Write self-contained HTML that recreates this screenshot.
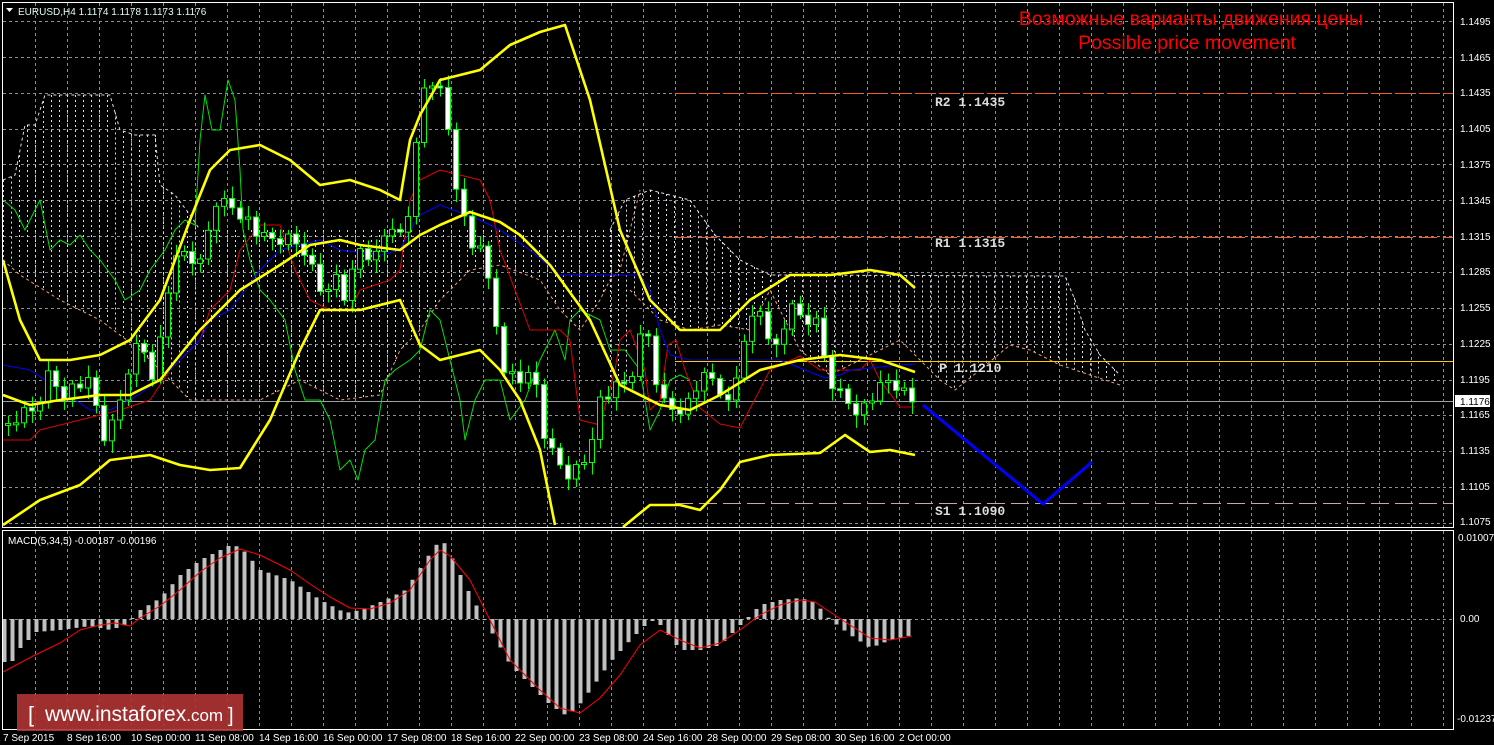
<!DOCTYPE html>
<html><head><meta charset="utf-8"><style>
html,body{margin:0;padding:0;background:#000;width:1494px;height:745px;overflow:hidden}
svg{display:block}
text{font-family:"Liberation Sans",sans-serif}
.ax{fill:#fff;font-size:10px}
.dt{fill:#fff;font-size:10px}
.lv{fill:#ddd;font-family:"Liberation Mono",monospace;font-size:13px;font-weight:bold}
</style></head><body>
<svg id="s" width="1494" height="745" xmlns="http://www.w3.org/2000/svg">
<rect width="1494" height="745" fill="#000"/>
<g id="grid"></g>
<g id="cloud"></g>
<g id="draw"></g>
<rect x="2.5" y="2.5" width="1451" height="525" fill="none" stroke="#fff" stroke-width="1"/>
<rect x="2.5" y="530.5" width="1451" height="199" fill="none" stroke="#fff" stroke-width="1"/>
<polygon points="6,8 13,8 9.5,12" fill="#fff"/>
<text x="18" y="15" fill="#dfe" font-size="10">EURUSD,H4  1.1174 1.1178 1.1173 1.1176</text>
<text x="1191" y="25" fill="#f00" font-size="19.5" text-anchor="middle">Возможные варианты движения цены</text>
<text x="1187" y="49" fill="#f00" font-size="19.5" text-anchor="middle">Possible price movement</text>
<text x="935" y="106" class="lv">R2 1.1435</text>
<text x="935" y="247" class="lv">R1 1.1315</text>
<text x="939" y="372" class="lv">P 1.1210</text>
<text x="935" y="515" class="lv">S1 1.1090</text>
<g class="ax">
<text x="1460" y="25">1.1495</text><text x="1460" y="61">1.1465</text><text x="1460" y="96">1.1435</text>
<text x="1460" y="132">1.1405</text><text x="1460" y="168">1.1375</text><text x="1460" y="204">1.1345</text>
<text x="1460" y="240">1.1315</text><text x="1460" y="275">1.1285</text><text x="1460" y="311">1.1255</text>
<text x="1460" y="347">1.1225</text><text x="1460" y="383">1.1195</text><text x="1460" y="418">1.1165</text>
<text x="1460" y="454">1.1135</text><text x="1460" y="490">1.1105</text><text x="1460" y="525">1.1075</text>
<text x="1458" y="541">0.01007</text><text x="1460" y="622">0.00</text><text x="1457" y="722">-0.01237</text>
</g>
<rect x="1455" y="395" width="35" height="12" fill="#fff"/>
<text x="1460" y="405" fill="#000" font-size="10">1.1176</text>
<text x="8" y="544" fill="#fff" font-size="10">MACD(5,34,5) -0.00187 -0.00196</text>
<g class="dt">
<text x="3" y="741">7 Sep 2015</text><text x="67" y="741">8 Sep 16:00</text><text x="131" y="741">10 Sep 00:00</text>
<text x="195" y="741">11 Sep 08:00</text><text x="259" y="741">14 Sep 16:00</text><text x="323" y="741">16 Sep 00:00</text>
<text x="387" y="741">17 Sep 08:00</text><text x="451" y="741">18 Sep 16:00</text><text x="515" y="741">22 Sep 00:00</text>
<text x="579" y="741">23 Sep 08:00</text><text x="643" y="741">24 Sep 16:00</text><text x="707" y="741">28 Sep 00:00</text>
<text x="771" y="741">29 Sep 08:00</text><text x="835" y="741">30 Sep 16:00</text><text x="899" y="741">2 Oct 00:00</text>
</g>
<rect x="17" y="694" width="226" height="37" fill="#b03434" opacity="0.9"/>
<text x="28" y="722" fill="#fff" font-size="22">[</text>
<text x="45" y="721" fill="#fff" font-size="21">www.instaforex<tspan font-size="17">.com</tspan></text>
<text x="228" y="722" fill="#fff" font-size="20">]</text>
</svg>
<script>
const NS="http://www.w3.org/2000/svg";
function el(p,t,a){const e=document.createElementNS(NS,t);for(const k in a)e.setAttribute(k,a[k]);p.appendChild(e);return e}
const G=document.getElementById('grid'),C=document.getElementById('cloud'),D=document.getElementById('draw');
for(let x=35;x<1454;x+=32){el(G,'line',{x1:x+.5,y1:3,x2:x+.5,y2:527,stroke:'#8a8f99','stroke-dasharray':'3,3'});el(G,'line',{x1:x+.5,y1:531,x2:x+.5,y2:729,stroke:'#8a8f99','stroke-dasharray':'3,3'})}
for(let i=0;i<15;i++){const y=Math.round(21+i*35.86)+.5;el(G,'line',{x1:3,y1:y,x2:1454,y2:y,stroke:'#8a8f99','stroke-dasharray':'3,3'})}
el(G,'line',{x1:3,y1:619.5,x2:1454,y2:619.5,stroke:'#8a8f99','stroke-dasharray':'3,3'});
function pl(pts,col,w,extra){el(D,'polyline',Object.assign({points:pts.map(p=>p.join(',')).join(' '),fill:'none',stroke:col,'stroke-width':w,'stroke-linejoin':'round'},extra||{}))}
function interp(pts,x){for(let i=0;i<pts.length-1;i++){if(x>=pts[i][0]&&x<=pts[i+1][0]){const t=(x-pts[i][0])/(pts[i+1][0]-pts[i][0]);return pts[i][1]+t*(pts[i+1][1]-pts[i][1])}}return pts[pts.length-1][1]}
function cloud(top,bot,x0,x1,col){for(let x=x0;x<=x1;x+=8){const t=interp(top,x),b=interp(bot,x);if(b>t)el(C,'line',{x1:x+.5,y1:t,x2:x+.5,y2:b,stroke:col,'stroke-dasharray':'2,3','stroke-width':1})}
 el(C,'polyline',{points:top.map(p=>p.join(',')).join(' '),fill:'none',stroke:col,'stroke-dasharray':'3,3'});
 el(C,'polyline',{points:bot.map(p=>p.join(',')).join(' '),fill:'none',stroke:'#f0a070','stroke-dasharray':'3,3'})}
cloud([[3,180],[15,175],[25,125],[35,125],[45,95],[110,95],[120,130],[135,135],[155,135],[160,185],[175,195],[190,215],[200,230]],[[3,260],[20,275],[60,300],[100,320],[140,350],[170,380],[190,400],[260,400],[300,380],[340,400],[380,395],[400,350],[420,330],[440,300],[470,270],[500,265],[540,280],[560,310],[580,330],[600,300],[610,280],[620,270],[640,190]],3,640,'#e8d8e8');
cloud([[610,230],[625,200],[650,190],[690,200],[715,235],[740,260],[770,275],[1065,276],[1075,300],[1085,330],[1100,355],[1120,375]],[[630,290],[660,320],[690,330],[720,325],[750,330],[770,290],[800,350],[830,375],[860,360],[900,340],[940,380],[955,390],[980,370],[1010,345],[1030,350],[1060,365],[1090,375],[1120,385]],610,1120,'#e0e0e8');
el(D,'line',{x1:675,y1:93.5,x2:1454,y2:93.5,stroke:'#ff5a1e','stroke-dasharray':'18,6'});
el(D,'line',{x1:675,y1:237.5,x2:1454,y2:237.5,stroke:'#ff5a1e','stroke-dasharray':'18,6'});
el(D,'line',{x1:675,y1:361.5,x2:1454,y2:361.5,stroke:'#ffd000'});
el(D,'line',{x1:675,y1:503.5,x2:1454,y2:503.5,stroke:'#c8a8a0','stroke-dasharray':'18,6'});
el(D,'line',{x1:3,y1:401.5,x2:1454,y2:401.5,stroke:'#9aa0a8'});
pl([[3,200],[15,210],[25,230],[40,200],[50,250],[60,240],[70,245],[80,235],[90,250],[100,260],[115,280],[125,300],[140,290],[150,270],[165,250],[175,230],[185,220],[195,225],[200,140],[205,95],[212,130],[220,130],[228,80],[235,100],[240,170],[243,230],[250,260],[260,290],[270,300],[285,320],[295,370],[305,400],[320,400],[330,420],[340,470],[350,460],[358,480],[365,450],[375,440],[385,380],[395,370],[410,360],[420,350],[430,310],[440,320],[450,360],[460,400],[465,440],[475,400],[485,380],[500,380],[510,420],[525,400],[540,360],[555,330],[565,360],[570,320],[580,310],[600,320],[610,350],[625,350],[640,370],[650,430],[660,410],[670,380],[680,375],[690,380]],'#00e000',1);
pl([[3,440],[30,440],[40,430],[60,425],[80,420],[100,415],[120,410],[150,400],[170,370],[200,340],[210,310],[230,290],[240,250],[260,225],[280,225],[295,270],[310,300],[330,310],[340,310],[350,310],[360,290],[390,280],[400,270],[410,200],[420,180],[440,170],[480,180],[490,200],[500,250],[530,330],[560,330],[570,340],[580,420],[600,425],[615,370],[620,340],[630,330],[645,370],[650,410],[660,400],[668,345],[676,340],[685,370],[700,408],[720,424],[740,428],[770,370],[800,356],[820,370],[840,370],[860,370],[870,360],[880,380],[900,407],[915,407]],'#e00000',1);
pl([[3,365],[30,370],[60,390],[90,410],[110,410],[130,400],[160,380],[180,360],[200,340],[210,320],[230,310],[260,270],[280,250],[300,245],[320,240],[340,250],[380,255],[400,250],[410,230],[420,215],[440,205],[480,220],[500,230],[530,250],[560,275],[640,275],[650,290],[660,330],[670,355],[690,360],[780,360],[825,378],[840,375],[850,370],[870,368],[900,365],[915,364]],'#0000ff',1);
const cp=[[8,425],[20,415],[35,410],[50,370],[60,395],[75,385],[90,385],[105,440],[115,420],[130,360],[140,340],[155,380],[165,300],[180,250],[200,265],[215,200],[230,205],[245,215],[260,240],[275,240],[290,240],[305,250],[320,290],[335,275],[345,300],[360,250],[375,260],[390,220],[405,245],[420,95],[435,80],[445,110],[455,180],[470,250],[480,240],[495,320],[505,370],[520,380],[535,380],[545,440],[555,460],[570,475],[585,460],[600,400],[615,390],[630,380],[645,320],[660,400],[675,410],[690,400],[700,380],[715,380],[730,410],[745,330],[760,310],[775,350],[790,310],[805,320],[815,320],[830,380],[845,400],[860,410],[875,395],[890,380],[905,395],[912,402]];
let prev=425,k=0;
for(let x=8;x<=912;x+=8){k++;let c=interp(cp,x)+((k*37)%11-5)*1.5;const o=prev;const hi=Math.min(o,c)-4-(k*13)%9,lo=Math.max(o,c)+4+(k*7)%10;
 el(D,'line',{x1:x+.5,y1:hi,x2:x+.5,y2:lo,stroke:'#00ff00'});
 const bear=c>o;let t=Math.min(o,c),h=Math.max(Math.abs(c-o),2);
 el(D,'rect',{x:x-2.5,y:t,width:5,height:h,fill:bear?'#fff':'#000',stroke:'#00ff00','stroke-width':1});prev=c}
pl([[3,260],[20,320],[40,360],[70,360],[100,355],[130,340],[160,300],[190,220],[210,170],[230,150],[260,145],[290,160],[320,185],[350,180],[380,190],[400,200],[410,140],[420,115],[440,80],[480,70],[510,45],[540,32],[565,25],[590,100],[620,230],[650,300],[680,330],[720,330],[750,300],[790,275],[830,275],[870,270],[900,275],[915,288]],'#ffff00',2.6);
pl([[3,395],[30,405],[60,400],[100,395],[130,395],[160,380],[200,330],[240,290],[280,265],[310,245],[340,240],[360,245],[400,250],[420,235],[440,225],[470,212],[500,222],[520,235],[550,265],[590,320],[620,385],[660,405],[690,410],[720,395],[760,370],[800,360],[840,355],[880,360],[915,372]],'#ffff00',2.6);
pl([[3,525],[40,500],[80,485],[110,460],[150,455],[180,465],[210,470],[240,468],[270,420],[300,350],[320,310],[360,310],[400,300],[420,345],[440,360],[480,350],[500,370],[520,400],[540,450],[555,525]],'#ffff00',2.6);
pl([[623,527],[650,505],[680,505],[700,510],[720,490],[740,462],[770,455],[820,453],[845,435],[870,452],[890,450],[915,455]],'#ffff00',2.6);
pl([[923,405],[1043,504],[1092,462]],'#0000ff',3);
const mv=[[4,662],[12,661],[20,648],[36,632],[60,630],[90,626],[110,630],[125,625],[140,610],[160,598],[180,575],[200,560],[230,545],[240,547],[260,570],[290,580],[320,600],[345,613],[360,610],[385,600],[405,590],[420,568],[435,545],[445,543],[455,565],[470,595],[490,630],[510,665],[530,685],[550,705],[565,715],[575,710],[590,690],[610,662],[630,640],[650,620],[660,625],[680,650],[700,650],[720,645],[740,625],[760,605],[780,600],[800,598],[815,603],[830,620],[850,635],[870,648],[890,640],[912,635]];
for(let x=4;x<=912;x+=8){const v=interp(mv,x);el(D,'rect',{x:x-1.5,y:Math.min(v,619),width:4,height:Math.max(Math.abs(v-619),1),fill:'#c0c0c0'})}
pl([[3,672],[35,655],[60,643],[80,630],[100,625],[115,623],[130,626],[140,618],[160,606],[180,590],[200,572],[220,558],[240,549],[260,555],[290,570],[310,584],[330,597],[350,608],[370,609],[390,603],[410,590],[430,560],[440,550],[450,556],[470,580],[490,620],[510,660],[540,690],[560,708],[580,713],[600,698],[620,675],[640,645],[660,630],[680,640],[700,648],[720,643],[740,630],[760,615],[780,605],[800,600],[815,602],[830,612],[850,625],[870,638],[890,640],[912,636]],'#ff0000',1);
</script>
</body></html>
